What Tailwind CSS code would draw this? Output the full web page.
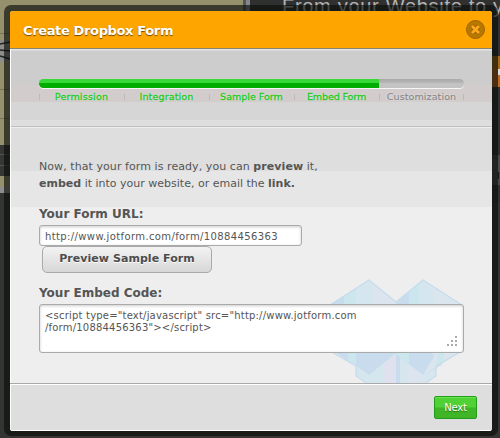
<!DOCTYPE html>
<html lang="en">
<head>
<meta charset="utf-8">
<title>Create Dropbox Form</title>
<script src="https://cdn.jsdelivr.net/npm/@tailwindcss/browser@4"></script>
</head>
<body class="relative h-[438px] w-[500px] overflow-hidden bg-[#343434] font-['DejaVu_Sans',sans-serif] text-[#555]">
<!-- Page behind the dialog -->
<svg class="absolute inset-0" width="500" height="438" aria-hidden="true">
  <rect width="246" height="202" fill="#95916d"/>
  <path d="M0 33.500H10M0 89.500H10M0 118.500H10" stroke="#77735a"/>
  <rect y="40" width="10" height="22" fill="#8d8d8b"/>
  <path d="M0 44L10 42M0 50L10 51M0 56L10 59" stroke="#222" stroke-width="1.500"/>
  <rect y="145" width="10" height="31" fill="#363636"/>
  <path d="M0 154.500H10M0 165.500H10" stroke="#555"/>
  <rect y="187" width="10" height="6" fill="#8d8d8b"/>
  <rect y="193" width="10" height="245" fill="#343434"/>
  <rect x="246" width="254" height="202" fill="#303030"/>
  <rect x="243" width="3" height="11" fill="#55565b"/>
  <rect x="246" width="4" height="11" fill="#85868a"/>
  <rect x="492" y="56" width="8" height="31" fill="#bd6c24"/>
  <rect x="492" y="56" width="8" height="13" fill="#a66b12"/>
  <rect x="498" y="69" width="2" height="6" fill="#ddd"/>
  <rect x="492" y="155" width="8" height="30" fill="#4a4a4a"/>
  <rect x="498" y="172" width="1" height="7" fill="#181818"/>
</svg>
<div class="absolute -top-[6px] left-[282px] w-[218px] overflow-hidden whitespace-nowrap font-['Liberation_Sans',sans-serif] text-[20px] leading-[24px] tracking-[0.7px] text-[#b4b4b4]">From your Website to y</div>

<div class="absolute top-[5px] left-[4px] h-[431px] w-[494px] rounded-[7px] bg-[#0b0e0b]/65"></div>

<section class="absolute top-[11px] left-[10px] flex h-[420px] w-[482px] flex-col overflow-hidden rounded-[3px] bg-[#eee]">
  <header class="flex h-[38px] shrink-0 items-center justify-between border-b border-[#8d8371] bg-[#ffa500] pr-[7px] pl-[13px]">
    <h1 class="pt-[2px] text-[13px] leading-[18px] font-bold whitespace-nowrap text-white [text-shadow:0_1px_1px_#704800] tracking-[-0.36px]">Create Dropbox Form</h1>
    <button class="block size-[19px]" aria-label="Close">
      <svg width="19" height="19" viewBox="0 0 19 19"><circle cx="9.500" cy="9.500" r="9" fill="#b87800" stroke="#9b6500"/><path d="M6 6L13 13M13 6L6 13" stroke="#8f5d00" stroke-width="4.500"/><path d="M6 6L13 13M13 6L6 13" stroke="#ffa71b" stroke-width="3"/></svg>
    </button>
  </header>

  <div class="relative flex h-[334px] shrink-0 flex-col border-l border-white bg-[linear-gradient(#e4e4e4_0_1px,#cdcdcd_2px_36px,#d2cccd_36px_53px,#d6d6d6_53px_71px,#dedede_71px_122px,#e6e6e6_122px_158px,#eee_158px)]">
    <!-- Dropbox emblem -->
    <svg class="absolute top-[229px] left-[319px]" width="146" height="105" viewBox="0 0 146 105" aria-hidden="true">
      <path d="M0 27L39 2L66 24L93 2L132 27L99 49L132 73L106 89V98L66 125L26 98V88L0 73L35 49Z" fill="#d6e6ee"/>
      <path d="M0 27L14 18V30H0Z" fill="#c8dced"/><path d="M14 18L26 10V30H14Z" fill="#cce6ed"/><path d="M39 3L65 24V30H43V6Z" fill="#dce5ef"/>
      <path d="M66 25L79 14V30H66Z" fill="#c8dced"/><path d="M79 14L89 6V30H79Z" fill="#cce6ed"/><path d="M98 6L130 27V30H108Z" fill="#dbe5ee"/>
      <path d="M2 72H66V75L39 97L26 88Z" fill="#c8dced"/><path d="M66 72H99L112 87L93 97L66 76Z" fill="#c8dced"/>
      <path d="M18 72H26V88L18 83Z" fill="#cce6ed"/><path d="M66 76L79 86V72H71Z" fill="#cce6ed"/>
      <path d="M108 72H132L108 88L93 97Z" fill="#dbe5ee"/><path d="M108 72H114V84L106 89Z" fill="#cce6ed"/>
      <path d="M53 86L66 76V105H53Z" fill="#dfe1ee"/><path d="M66 76L70 79V105H66Z" fill="#c8dced"/><path d="M78 86L93 97V105H78Z" fill="#dce5ef"/>
      <path d="M0 27L39 2L66 24L93 2L132 27M0 73L26 88V98L66 125L106 98V88L132 73" fill="none" stroke="#c5dcec" stroke-width="1.200"/>
    </svg>

    <div class="flex h-[78px] shrink-0 flex-col border-b border-[#bfbfbf] pt-[30px] pl-[28px] shadow-[0_1px_#eee]">
      <div class="h-[9px] w-[425px] overflow-hidden rounded-full bg-[linear-gradient(#a9a9a9,#b7b7b7_45%,#c3c3c3_50%)] shadow-[0_1px_#f5f5f5]">
        <div class="h-full w-[340px] bg-[linear-gradient(#38d838_0_45%,#00ad00_50%)]"></div>
      </div>
      <div class="mt-[3px] grid h-[12px] w-[425px] grid-cols-5 text-center text-[9.500px] leading-[12px] whitespace-nowrap text-[#22cb22] [text-shadow:0_0_2px_#eee] [-webkit-text-stroke:0.3px]">
        <div class="bg-[linear-gradient(#bbb,#bbb)] bg-[size:1px_6px] bg-[position:0_3px] bg-no-repeat tracking-[0.22px]">Permission</div>
        <div class="bg-[linear-gradient(#bbb,#bbb)] bg-[size:1px_6px] bg-[position:0_3px] bg-no-repeat tracking-[0.15px]">Integration</div>
        <div class="bg-[linear-gradient(#bbb,#bbb)] bg-[size:1px_6px] bg-[position:0_3px] bg-no-repeat tracking-[0.02px]">Sample Form</div>
        <div class="bg-[linear-gradient(#bbb,#bbb)] bg-[size:1px_6px] bg-[position:0_3px] bg-no-repeat tracking-[-0.1px]">Embed Form</div>
        <div class="bg-[linear-gradient(#bbb,#bbb),linear-gradient(#bbb,#bbb)] bg-[size:1px_6px] bg-[position:0_3px,100%_3px] bg-no-repeat tracking-[0.1px] text-[#858585] [-webkit-text-stroke:0.1px]">Customization</div>
      </div>
    </div>

    <div class="relative flex flex-col items-start pt-[31px] pl-[28px]">
      <p class="text-[11px] leading-[17px] whitespace-nowrap"><span class="block tracking-[0.07px]">Now, that your form is ready, you can <b>preview</b> it,</span><span class="block"><b>embed</b> it into your website, or email the <b>link.</b></span></p>
      <h2 class="mt-[13px] h-[20px] text-[12px] leading-[18px] font-bold whitespace-nowrap">Your Form URL:</h2>
      <div class="flex h-[21px] w-[263px] items-center rounded-[3px] border border-[#aaa] bg-white pt-[2px] pl-[5px] text-[10px] tracking-[0.38px] whitespace-nowrap shadow-[inset_0_1px_3px_#ccc]">http://www.jotform.com/form/10884456363</div>
      <button class="ml-[3px] h-[27px] w-[170px] rounded-[5px] border border-[#aaa] bg-linear-to-b from-[#f3f3f3] to-[#d7d7d7] text-[11px] font-bold tracking-[0.05px] whitespace-nowrap text-[#4c4c4c] [text-shadow:0_1px_white]">Preview Sample Form</button>
      <h2 class="mt-[11px] h-[20px] text-[12px] leading-[18px] font-bold whitespace-nowrap">Your Embed Code:</h2>
      <div class="relative h-[49px] w-[425px] rounded-[3px] border border-[#aaa] bg-white pt-[5px] pl-[5px] text-[10px] leading-[12px] tracking-[0.2px] whitespace-nowrap shadow-[inset_0_1px_3px_#ccc]">
        <div>&lt;script type="text/javascript" src="http://www.jotform.com</div>
        <div>/form/10884456363"&gt;&lt;/script&gt;</div>
        <svg class="absolute right-[6px] bottom-[5px]" width="10" height="11" fill="#aaa"><path d="M8 0h2v2h-2zM4 4h2v2H4zM8 4h2v2H8zM0 8h2v2H0zM4 8h2v2H4zM8 8h2v2H8z"/></svg>
      </div>
    </div>
  </div>

  <footer class="flex h-[48px] shrink-0 items-start justify-end border-t border-[#aaa] bg-[#dedede] pt-[12px] pr-[15px] shadow-[inset_0_1px_white,inset_1px_-1px_white]">
    <button class="h-[23px] w-[43px] rounded-[2px] border border-[#239b1b] bg-[linear-gradient(#50d237_0_48%,#3fb527_52%)] pb-[1px] text-[10px] text-white shadow-[inset_0_1px_#6be54e] tracking-[-0.2px] [text-shadow:0_1px_1px_#247519]">Next</button>
  </footer>
</section>
</body>
</html>
